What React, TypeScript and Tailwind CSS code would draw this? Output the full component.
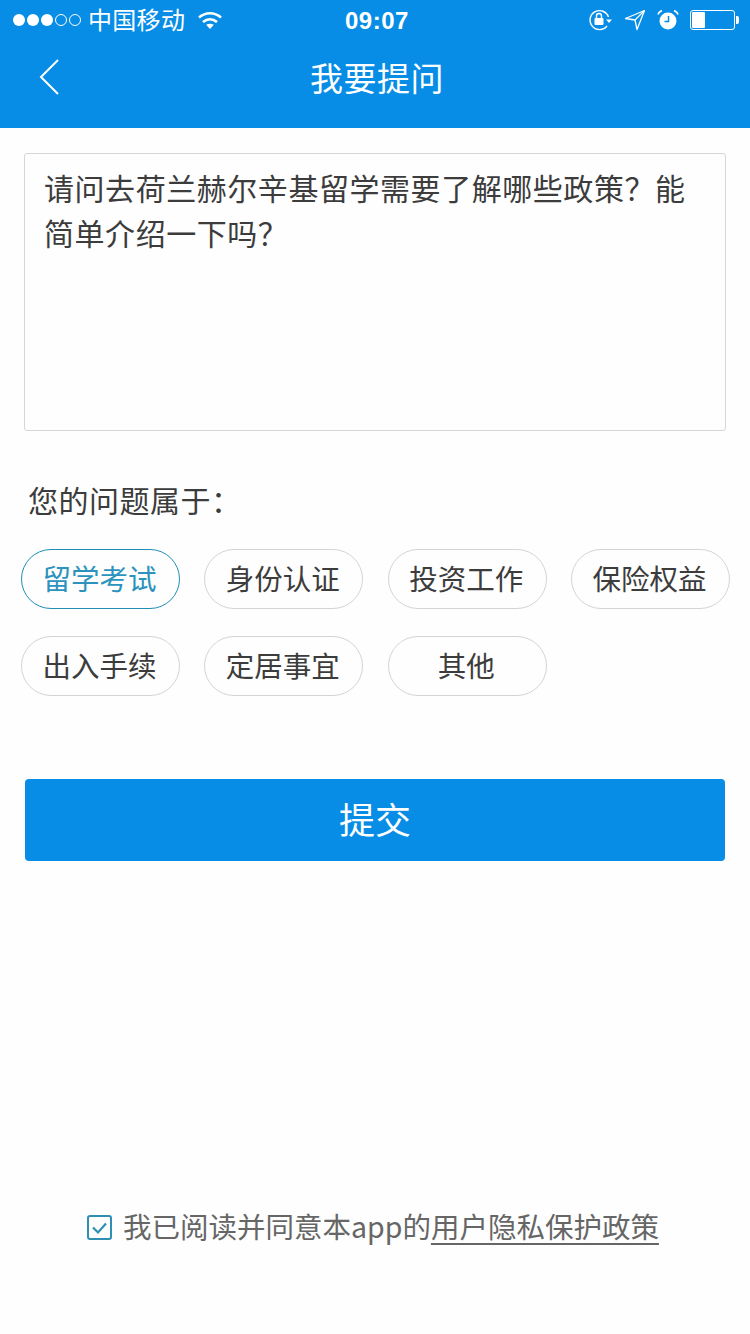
const cjk = "font-['Noto_Sans_CJK_SC','Liberation_Sans',sans-serif]";

const topics = ['留学考试', '身份认证', '投资工作', '保险权益', '出入手续', '定居事宜', '其他'];

function SignalDots() {
  return (
    <div className="flex items-center gap-[2px]">
      {[0, 1, 2].map((i) => (
        <div key={i} className="w-[12px] h-[12px] rounded-full bg-white" />
      ))}
      {[0, 1].map((i) => (
        <div key={i} className="w-[12px] h-[12px] rounded-full border border-white" />
      ))}
    </div>
  );
}

function Wifi() {
  return (
    <svg width="26" height="20" viewBox="0 0 26 20" fill="none" stroke="#fff" strokeWidth="2.6">
      <path d="M2 7.5c6.5-5.600 15.500-5.600 22 0" />
      <path d="M6 12c4.200-3.500 9.800-3.500 14 0" />
      <path d="M13 19l-3.800-4.200c2.200-1.500 5.400-1.500 7.600 0z" fill="#fff" stroke="none" />
    </svg>
  );
}

function RotationLock() {
  return (
    <svg width="24" height="22" viewBox="0 0 24 22" fill="none">
      <path d="M19.500 8A9.500 9.500 0 1 0 18 17" stroke="#fff" strokeWidth="1.400" />
      <path d="M17 10.500h6l-3 3.500z" fill="#fff" />
      <rect x="5.500" y="9" width="9" height="7" rx="1" fill="#fff" />
      <path d="M7.500 9V7a2.500 2.500 0 0 1 5 0v2" stroke="#fff" strokeWidth="1.400" />
    </svg>
  );
}

function LocationArrow() {
  return (
    <svg width="22" height="22" viewBox="0 0 22 22" fill="none" stroke="#fff" strokeWidth="1.300" strokeLinejoin="round">
      <path d="M20.500 1.500L1.500 9.500l9.500 1.500 2 9.500z" />
      <path d="M11 11L20.500 1.500" />
    </svg>
  );
}

function Alarm() {
  return (
    <svg width="22" height="22" viewBox="0 0 22 22" fill="none">
      <circle cx="11" cy="12" r="8.500" fill="#fff" />
      <path d="M11.500 7v5.500H7.500" stroke="#078de6" strokeWidth="1.500" />
      <path d="M1 5.500c.6-2 2-3.300 4-3.800M21 5.500c-.6-2-2-3.300-4-3.800" stroke="#fff" strokeWidth="1.500" />
    </svg>
  );
}

function Battery() {
  return (
    <div className="flex items-center">
      <div className="w-[45px] h-[20px] rounded-[3px] border border-white p-[1px]">
        <div className="w-[13px] h-full bg-white rounded-[1px]" />
      </div>
      <div className="w-[3px] h-[8px] bg-white rounded-r-[2px] ml-[1px]" />
    </div>
  );
}

function StatusBar() {
  return (
    <div className="relative flex items-center justify-between h-[40px] pl-[13px] pr-[11px] text-white">
      <div className="flex items-center">
        <SignalDots />
        <span className="ml-[7px] pb-[2px] text-[24px] leading-none tracking-[0.3px]">中国移动</span>
        <span className="ml-[12px]"><Wifi /></span>
      </div>
      <span className="absolute left-[345px] top-[6px] text-[24px] leading-[30px] font-semibold font-['Liberation_Sans',sans-serif] tracking-[0.5px]">09:07</span>
      <div className="flex items-center">
        <RotationLock />
        <span className="ml-[11px]"><LocationArrow /></span>
        <span className="ml-[11px]"><Alarm /></span>
        <span className="ml-[11px]"><Battery /></span>
      </div>
    </div>
  );
}

function NavBar() {
  return (
    <div className="relative flex items-center justify-center h-[88px] pb-[14px] pl-[4px]">
      <svg className="absolute left-[38px] top-[18px]" width="22" height="38" viewBox="0 0 22 38" fill="none" stroke="#fff" strokeWidth="2">
        <path d="M20 2L3 19l17 17" />
      </svg>
      <span className="text-white text-[33px] leading-none tracking-[0.5px]">我要提问</span>
    </div>
  );
}

export default function App() {
  return (
    <div className={`w-[750px] h-[1334px] bg-[#fefefe] overflow-hidden ${cjk}`}>
      <header className="bg-[#078de6]">
        <StatusBar />
        <NavBar />
      </header>

      <div className="mt-[25px] mx-[24px] h-[278px] border border-[#d6d6d6] rounded-[3px] pl-[19px] pr-[20px] pt-[11px] text-[30px] leading-[45px] text-[#3c3c3c] tracking-[0.55px]">
        请问去荷兰赫尔辛基留学需要了解哪些政策？能简单介绍一下吗？
      </div>

      <div className="mt-[48px] mb-[30px] ml-[28px] text-[30px] leading-[40px] text-[#3c3c3c] tracking-[0.5px]">您的问题属于：</div>

      <div className="ml-[21px] grid grid-cols-[159px_159px_159px_159px] gap-x-[24.330px] gap-y-[27px]">
        {topics.map((t, i) => (
          <div
            key={t}
            className={
              i === 0
                ? 'h-[60px] pb-[2px] pr-[2px] rounded-full border border-[#1f8fb5] flex items-center justify-center text-[28.500px] text-[#2b93bd]'
                : 'h-[60px] pb-[2px] pr-[2px] rounded-full border border-[#d4d4d4] flex items-center justify-center text-[28.500px] text-[#3c3c3c]'
            }
          >
            {t}
          </div>
        ))}
      </div>

      <button className="block mt-[83px] ml-[25px] w-[700px] h-[82px] pb-[4px] bg-[#078de6] rounded-[4px] text-white text-[36px]">
        提交
      </button>

      <div className="mt-[347px] ml-[87px] flex items-center text-[28.500px] leading-[36px] text-[#666]">
        <svg width="25" height="25" viewBox="0 0 25 25" fill="none" className="shrink-0 mt-[3px]">
          <rect x="1" y="1" width="23" height="23" rx="2" stroke="#2f8fb3" strokeWidth="2" />
          <path d="M6 12.500l5 5 8-9" stroke="#2f8fb3" strokeWidth="2.200" />
        </svg>
        <span className="ml-[11px] whitespace-nowrap">我已阅读并同意本app的<span className="underline underline-offset-[5px]">用户隐私保护政策</span></span>
      </div>
    </div>
  );
}
